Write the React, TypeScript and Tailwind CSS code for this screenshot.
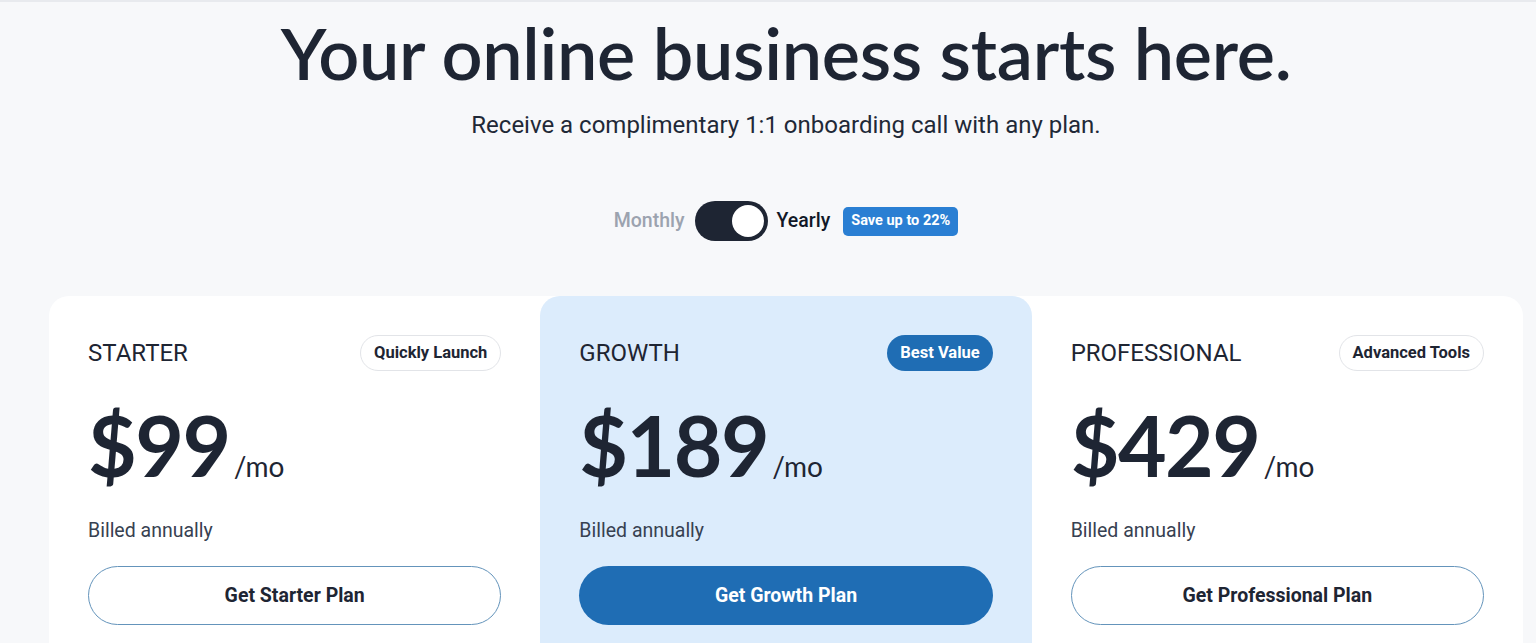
import React, { useState } from "react";

const plans = [
  { name: "STARTER", tag: "Quickly Launch", price: "$99", cta: "Get Starter Plan", featured: false },
  { name: "GROWTH", tag: "Best Value", price: "$189", cta: "Get Growth Plan", featured: true },
  { name: "PROFESSIONAL", tag: "Advanced Tools", price: "$429", cta: "Get Professional Plan", featured: false },
];

export default function App() {
  const [yearly, setYearly] = useState(true);

  return (
    <div className="min-h-[643px] bg-[#f7f8fa] border-t-2 border-[#e8eaee] overflow-hidden font-['Roboto',sans-serif] text-[#1e2533]">
      <div className="pl-[49px] pr-[13px]">
        <h1 className="mt-[8px] text-center font-['Lato',sans-serif] font-semibold text-[72px] leading-[84px] tracking-[-0.3px]">
          Your online business starts here.
        </h1>
        <p className="mt-[16px] text-center text-[24px] leading-[30px] text-[#1f2937]">
          Receive a complimentary 1:1 onboarding call with any plan.
        </p>

        <div className="mt-[61px] flex items-center justify-center">
          <span className={`text-[19.5px] font-medium ${yearly ? "text-[#9ca3af]" : "text-[#111827]"}`}>Monthly</span>
          <button
            onClick={() => setYearly(!yearly)}
            className="ml-[10px] w-[73px] h-[40px] rounded-full bg-[#1e2533] flex items-center px-[4px]"
          >
            <span className={`block w-[32px] h-[32px] rounded-full bg-white transition-transform ${yearly ? "translate-x-[33px]" : ""}`} />
          </button>
          <span className={`ml-[9px] text-[19.5px] font-medium ${yearly ? "text-[#111827]" : "text-[#9ca3af]"}`}>Yearly</span>
          <span className="ml-[13px] h-[29px] px-[8px] flex items-center rounded-[5px] bg-[#2a7fd3] text-white text-[14.5px] font-bold">
            Save up to 22%
          </span>
        </div>

        <div className="mt-[55px] grid grid-cols-3 bg-white rounded-t-[20px]">
          {plans.map((p) => (
            <div
              key={p.name}
              className={`px-[39px] pt-[39px] pb-[40px] rounded-t-[20px] ${p.featured ? "bg-[#dcecfc]" : ""}`}
            >
              <div className="flex items-center justify-between">
                <span className="text-[24px] leading-[28px] text-[#1e2533]">{p.name}</span>
                <span
                  className={`h-[36px] px-[13px] flex items-center rounded-full text-[16.5px] font-bold ${
                    p.featured ? "bg-[#1f6db4] text-white" : "border border-[#e2e4e8] text-[#1e2533]"
                  }`}
                >
                  {p.tag}
                </span>
              </div>
              <div className="mt-[19px] flex items-baseline">
                <span className="font-['Lato',sans-serif] font-bold text-[84px] leading-[110px] tracking-[-1.5px]">{p.price}</span>
                <span className="ml-[4px] font-['Lato',sans-serif] text-[28px]">/mo</span>
              </div>
              <p className="mt-[19px] text-[19.5px] leading-[24px] text-[#374151]">Billed annually</p>
              <button
                className={`mt-[23px] w-full h-[59px] rounded-full text-[19.5px] font-bold ${
                  p.featured
                    ? "bg-[#1f6db4] text-white"
                    : "border border-[#6494bb] text-[#1e2533] bg-white"
                }`}
              >
                {p.cta}
              </button>
            </div>
          ))}
        </div>
      </div>
    </div>
  );
}
